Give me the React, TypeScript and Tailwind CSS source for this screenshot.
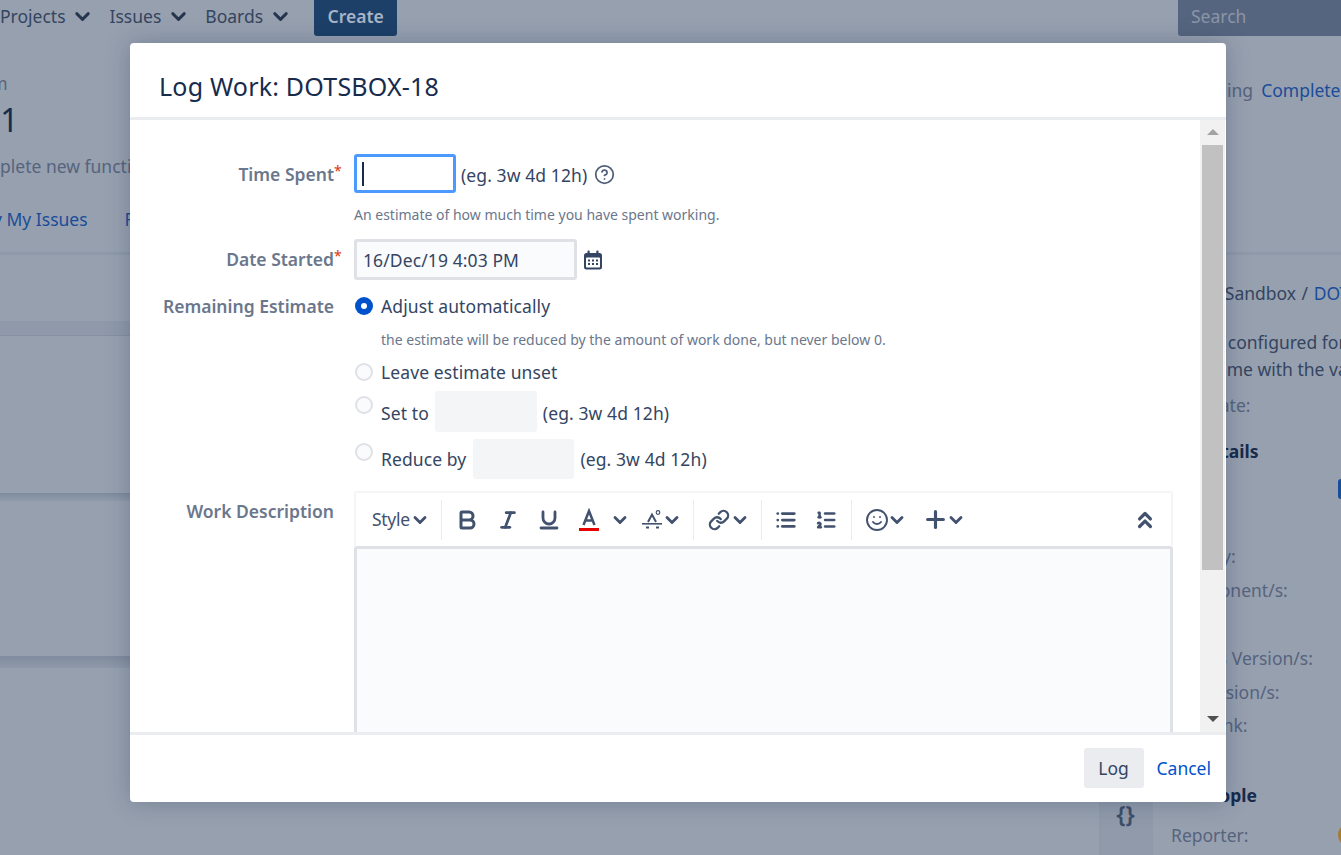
import { ChevronDown, ChevronsUp, CircleHelp, Italic, Link, List, ListOrdered, Plus, Smile, Underline, Bold } from 'lucide-react'

const FONT = { fontFamily: '"Noto Sans", "Open Sans", sans-serif' }

function NavItem({ label }: { label: string }) {
  return (
    <span className="flex items-center gap-[9px] text-[#344560]">
      {label}
      <span className="flex w-[16px] justify-center">
        <ChevronDown size={23} strokeWidth={3} className="-mx-1 shrink-0 text-[#26354d]" />
      </span>
    </span>
  )
}

function DetailRow({ label, className }: { label: string; className: string }) {
  return <div className={`leading-[22px] text-[#56647e] ${className}`}>{label}</div>
}

function Background() {
  return (
    <div className="flex h-full flex-col overflow-hidden bg-[#97a0af] text-[17.5px]">
      <div className="flex h-[36px] shrink-0 items-center">
        <div className="flex h-full items-center gap-[19px] pb-[3px]">
          <NavItem label="Projects" />
          <NavItem label="Issues" />
          <NavItem label="Boards" />
        </div>
        <div className="ml-[26px] flex h-full w-[83px] items-center justify-center rounded-b-[3px] bg-[#1c4068] pb-[3px] text-[17.5px] font-semibold text-[#a9b5c7]">
          Create
        </div>
        <div className="ml-auto flex h-full w-[163px] items-center rounded-bl-[3px] bg-[#56657f] pb-[3px] pl-[13px] text-[#8b95a8]">
          Search
        </div>
      </div>

      <div className="flex h-[219px] shrink-0 justify-between border-b-[3px] border-[#8f99a9]">
        <div className="w-[130px] pt-[36px] whitespace-nowrap">
          <div className="-ml-[37px] leading-[22px] text-[#56647e]">Team</div>
          <div className="mt-[4px] -ml-[98px] text-[32px] leading-[44px] text-[#172b4d]">Sprint 1</div>
          <div className="mt-[13px] -ml-[38px] leading-[22px] text-[#56647e]">Complete new functions</div>
          <div className="mt-[31px] -ml-[36px] flex gap-[37px] leading-[22px] text-[#1a4d99]">
            <span>Only My Issues</span>
            <span>Recently Updated</span>
          </div>
        </div>
        <div className="flex w-[156px] gap-[8px] pt-[43px] leading-[22px] whitespace-nowrap">
          <span className="text-[#56647e]">Pending</span>
          <span className="text-[#1a4d99]">Complete Sprint</span>
        </div>
      </div>

      <div className="flex min-h-0 flex-1">
        <div className="w-[1099px] shrink-0">
          <div className="mt-[66px] h-[14px] bg-[#8f99a9]" />
          <div className="h-[158px] border-t border-[#8490a3]" />
          <div className="h-[7px] bg-linear-to-b from-[#7f8b9e] to-[#8f99a9]" />
          <div className="h-[156px] border-t border-[#8f99a9]" />
          <div className="h-[12px] bg-linear-to-b from-[#808c9f] to-[#8f99a9]" />
        </div>

        <div className="flex w-[54px] shrink-0 flex-col items-center border-l-2 border-[#8f99a9] bg-[#909aaa]">
          <div className="mt-[545px] -ml-[3px] text-[24px] leading-[28px] font-semibold text-[#3f4e68]">{'{}'}</div>
        </div>

        <div className="min-w-0 flex-1 pl-[18px] whitespace-nowrap">
          <div className="mt-[27px] ml-[3px] leading-[22px] [word-spacing:1px] text-[#344560]">
            DOTS Sandbox / <span className="text-[#1a4d99]">DOTSBOX-18</span>
          </div>
          <div className="mt-[25px] leading-[27px] text-[#344560]">
            <div>is now configured for</div>
            <div className="ml-[6px]">the same with the values</div>
          </div>
          <div className="mt-[11px] leading-[22px] text-[#56647e]">Due date:</div>
          <div className="mt-[24px] flex items-center gap-[13px] leading-[22px] font-bold text-[#172b4d]">
            <span className="h-[14px] w-[14px]" />
            <span>Details</span>
          </div>
          <div className="relative">
            <span className="absolute top-[17px] left-[167px] h-[20px] w-[10px] rounded-l-[3px] bg-[#1a4d99]" />
          </div>
          <DetailRow label="Priority:" className="mt-[83px]" />
          <DetailRow label="Component/s:" className="mt-[12px]" />
          <DetailRow label="Affects Version/s:" className="mt-[46px]" />
          <DetailRow label="Fix Version/s:" className="mt-[12px]" />
          <DetailRow label="Epic Link:" className="mt-[11px]" />
          <div className="mt-[48px] flex items-center gap-[13px] leading-[22px] font-bold text-[#172b4d]">
            <span className="h-[14px] w-[14px] rounded-[2px] border border-[#8f99a9]" />
            <span>People</span>
          </div>
          <div className="mt-[17px] flex items-center justify-between leading-[22px] text-[#56647e]">
            <span>Reporter:</span>
            <span className="-mr-[21px] h-[24px] w-[24px] rounded-full bg-[#a67c2a]" />
          </div>
        </div>
      </div>
    </div>
  )
}

function CalendarIcon() {
  return (
    <svg width="20" height="20" viewBox="0 0 20 20" className="ml-[6px] shrink-0">
      <rect x="1" y="3" width="18" height="16.5" rx="2.5" fill="#344563" />
      <rect x="3" y="7.5" width="14" height="10" rx="0.8" fill="#fff" />
      <rect x="4.5" y="0.5" width="2.2" height="4.5" rx="1" fill="#344563" />
      <rect x="13.3" y="0.5" width="2.2" height="4.5" rx="1" fill="#344563" />
      {[5, 9, 13].map(x => <rect key={`a${x}`} x={x} y="9.5" width="2" height="2" fill="#344563" />)}
      {[5, 9, 13].map(x => <rect key={`b${x}`} x={x} y="13" width="2" height="2" fill="#344563" />)}
    </svg>
  )
}

function Radio({ checked, className = '' }: { checked?: boolean; className?: string }) {
  if (checked) {
    return (
      <span className={`ml-px flex h-[18px] w-[18px] shrink-0 items-center justify-center rounded-full bg-[#0052cc] ${className}`}>
        <span className="h-[6px] w-[6px] rounded-full bg-white" />
      </span>
    )
  }
  return <span className={`ml-px h-[18px] w-[18px] shrink-0 rounded-full border-[2.5px] border-[#dfe1e6] bg-[#fafbfc] ${className}`} />
}

function FieldLabel({ text, required, className = '' }: { text: string; required?: boolean; className?: string }) {
  return (
    <div className={`relative w-[203px] shrink-0 text-right text-[17.5px] leading-[22px] font-semibold text-[#6b778c] ${className}`}>
      {text}
      {required && <span className="absolute top-[-3px] left-[203px] text-[14px] font-normal text-[#de350b]">*</span>}
    </div>
  )
}

function Sep({ className = '' }: { className?: string }) {
  return <span className={`h-[40px] w-px shrink-0 bg-[#ebecf0] ${className}`} />
}

function Caret({ className = '' }: { className?: string }) {
  return (
    <span className={`flex w-[14px] shrink-0 justify-center ${className}`}>
      <ChevronDown size={20} strokeWidth={3.4} className="-mx-1 shrink-0 text-[#42526e]" />
    </span>
  )
}

function Toolbar() {
  const ink = 'shrink-0 text-[#42526e]'
  return (
    <div className="flex h-[55px] items-center rounded-t-[3px] border-2 border-b-0 border-[#f4f5f7] bg-white pr-[13px] pl-[16px]">
      <span className="text-[17.5px] tracking-[-0.3px] text-[#42526e]">Style</span>
      <Caret className="ml-[3px]" />
      <Sep className="ml-[14px]" />
      <Bold size={24} strokeWidth={3} className={`${ink} ml-[13px]`} />
      <Italic size={22} strokeWidth={3} className={`${ink} ml-[18px]`} />
      <Underline size={24} strokeWidth={2.8} className={`${ink} ml-[18px]`} />
      <svg width="22" height="23" viewBox="0 0 22 23" className="ml-[17px] shrink-0">
        <path d="M5.5 17 L11 3 L16.5 17 M7.5 12.5 H14.5" fill="none" stroke="#42526e" strokeWidth="2.5" />
        <rect x="1" y="20" width="20" height="3" fill="#e60000" />
      </svg>
      <Caret className="ml-[13px]" />
      <svg width="24" height="22" viewBox="0 0 24 22" className="ml-[13px] shrink-0">
        <path d="M8 13 L12 5.5 L16 13" fill="none" stroke="#42526e" strokeWidth="2" />
        <circle cx="18" cy="3.5" r="1.8" fill="none" stroke="#42526e" strokeWidth="1.2" />
        <rect x="2" y="14" width="20" height="1.6" fill="#42526e" />
        <rect x="6" y="17.5" width="3" height="2" fill="#42526e" />
        <rect x="16" y="17.5" width="3" height="2" fill="#42526e" />
      </svg>
      <Caret className="ml-px" />
      <Sep className="ml-[14px]" />
      <Link size={22} strokeWidth={2.5} className={`${ink} ml-[14px]`} />
      <Caret className="ml-[3px]" />
      <Sep className="ml-[14px]" />
      <List size={22} strokeWidth={3} className={`${ink} ml-[13px]`} />
      <ListOrdered size={22} strokeWidth={2.8} className={`${ink} ml-[18px]`} />
      <Sep className="ml-[14px]" />
      <Smile size={24} strokeWidth={1.9} className={`${ink} ml-[13px]`} />
      <Caret className="ml-px" />
      <Plus size={27} strokeWidth={2.8} className={`${ink} ml-[18px]`} />
      <Caret />
      <ChevronsUp size={26} strokeWidth={3} className={`${ink} ml-auto`} />
    </div>
  )
}

function Scrollbar() {
  return (
    <div className="flex w-[25px] shrink-0 flex-col items-center bg-[#f1f1f1] pt-[9px]">
      <span className="h-0 w-0 border-x-[6px] border-b-[6px] border-x-transparent border-b-[#a3a3a3]" />
      <span className="mt-[10px] h-[425px] w-[21px] bg-[#c1c1c1]" />
      <span className="mt-[146px] h-0 w-0 border-x-[6px] border-t-[6px] border-x-transparent border-t-[#505050]" />
    </div>
  )
}

function LogWorkDialog() {
  const example = '(eg. 3w 4d 12h)'
  const text = 'text-[17.5px] leading-[24px] tracking-[0.1px] text-[#344563]'
  const hint = 'text-[14px] leading-[18px] text-[#6b778c]'
  return (
    <div className="absolute top-[43px] left-[130px] flex h-[759px] w-[1096px] flex-col overflow-hidden rounded-[4px] bg-white shadow-[0_0_24px_rgba(9,30,66,0.25)]">
      <div className="flex h-[74px] shrink-0 items-end pb-[15px] pl-[29px] text-[25px] leading-[32px] tracking-[0.2px] text-[#172b4d]">
        Log Work: DOTSBOX-18
      </div>
      <div className="flex min-h-0 flex-1 border-y-[3px] border-[#ebecf0] px-px">
        <div className="min-w-0 flex-1 overflow-hidden pt-[34px] pr-[27px]">
          <div className="flex items-center">
            <FieldLabel text="Time Spent" required />
            <div className="ml-[20px] flex h-[39px] w-[102px] items-center rounded-[3px] border-[3px] border-[#4c9aff] pl-[5px]">
              <span className="h-[24px] w-[2px] bg-[#172b4d]" />
            </div>
            <span className={`mt-[2px] ml-[5px] ${text}`}>{example}</span>
            <CircleHelp size={21} strokeWidth={2} className="mt-[2px] ml-[7px] text-[#505f79]" />
          </div>
          <div className={`mt-[13px] ml-[223px] ${hint}`}>
            An estimate of how much time you have spent working.
          </div>

          <div className="mt-[15px] flex items-center">
            <FieldLabel text="Date Started" required className="-mt-[2px]" />
            <div className={`ml-[20px] flex h-[41px] w-[223px] items-center rounded-[3px] border-[3px] border-[#dfe1e6] bg-[#fafbfc] pl-[6px] ${text}`}>
              16/Dec/19 4:03 PM
            </div>
            <CalendarIcon />
          </div>

          <div className="mt-[14px] flex">
            <FieldLabel text="Remaining Estimate" className="mt-px" />
            <div className="ml-[20px] min-w-0 flex-1">
              <div className="flex items-center gap-[8px]">
                <Radio checked />
                <span className={text}>Adjust automatically</span>
              </div>
              <div className={`mt-[13px] ml-[27px] ${hint}`}>
                the estimate will be reduced by the amount of work done, but never below 0.
              </div>
              <div className="mt-[11px] flex items-center gap-[8px]">
                <Radio />
                <span className={text}>Leave estimate unset</span>
              </div>
              <div className="mt-[7px] flex items-start gap-[6px]">
                <Radio className="mt-[5px] mr-[2px]" />
                <span className={`mt-[10px] ${text}`}>Set to</span>
                <span className="h-[41px] w-[102px] rounded-[3px] bg-[#f4f5f7]" />
                <span className={`mt-[10px] ${text}`}>{example}</span>
              </div>
              <div className="mt-[7px] flex items-start gap-[7px]">
                <Radio className="mt-[4px] mr-px" />
                <span className={`mt-[8px] ${text}`}>Reduce by</span>
                <span className="h-[40px] w-[101px] rounded-[3px] bg-[#f4f5f7]" />
                <span className={`mt-[8px] -ml-px ${text}`}>{example}</span>
              </div>
            </div>
          </div>

          <div className="mt-[12px] flex">
            <FieldLabel text="Work Description" className="mt-[9px]" />
            <div className="ml-[20px] min-w-0 flex-1">
              <Toolbar />
              <div className="h-[300px] rounded-[3px] border-[3px] border-[#dfe1e6] bg-[#fafbfc]" />
            </div>
          </div>
        </div>
        <Scrollbar />
      </div>
      <div className="flex h-[67px] shrink-0 items-center justify-end gap-[13px] pr-[15px] pb-[1px] text-[17.5px]">
        <button className="h-[40px] w-[60px] rounded-[3px] bg-[#ebecf0] text-[#344563]">Log</button>
        <a className="text-[#0052cc]">Cancel</a>
      </div>
    </div>
  )
}

export default function App() {
  return (
    <div className="relative h-[855px] w-[1341px] overflow-hidden" style={FONT}>
      <Background />
      <LogWorkDialog />
    </div>
  )
}
